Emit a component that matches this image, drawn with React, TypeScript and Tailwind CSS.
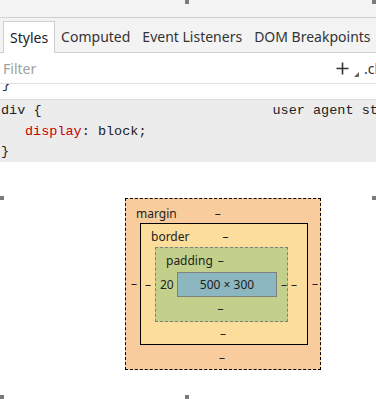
import React from 'react';

const ui = { fontFamily: '"Segoe UI", "Noto Sans", "Open Sans", sans-serif' };
const mono = { fontFamily: 'Consolas, "Liberation Mono", "DejaVu Sans Mono", monospace' };

function Handle({ className }: { className: string }) {
  return <div className={`absolute w-[4px] h-[4px] bg-[#7a7a7a] ${className}`} />;
}

const tabs = ['Styles', 'Computed', 'Event Listeners', 'DOM Breakpoints'];

export default function App() {
  return (
    <div className="relative w-[376px] h-[399px] overflow-hidden bg-white text-[#222]" style={ui}>
      <div className="h-[18px] bg-[#f3f3f3] border-b border-[#d0d0d0]" />

      <div className="h-[35px] bg-[#f3f3f3] border-b border-[#cfcfcf] flex items-end pl-[3px] whitespace-nowrap">
        {tabs.map((t, i) => (
          <div
            key={t}
            className={`h-[32px] flex items-center text-[14px] leading-none px-[6px] -mb-px ${
              i === 0 ? 'bg-white border border-b-0 border-[#cfcfcf] text-[#222]' : 'text-[#333]'
            }`}
          >
            {t}
          </div>
        ))}
      </div>

      <div className="h-[31px] flex items-center border-b border-[#e0e0e0] whitespace-nowrap overflow-hidden">
        <span className="ml-[3px] w-[333px] shrink-0 text-[14px] text-[#a0a0a0]">Filter</span>
        <svg width="13" height="13" viewBox="0 0 13 13" className="shrink-0">
          <path d="M6.5 0.5 V12.5 M0.5 6.5 H12.5" stroke="#333" strokeWidth="1.6" />
        </svg>
        <svg width="5" height="5" viewBox="0 0 5 5" className="shrink-0 ml-[5px] mt-[13px]">
          <path d="M5 0 L5 5 L0 5 Z" fill="#666" />
        </svg>
        <span className="shrink-0 ml-[5px] text-[14px] text-[#333]">.cls</span>
      </div>

      <div className="h-[15px] overflow-hidden relative" style={mono}>
        <div className="absolute left-[2px] -top-[9px] text-[13.5px]">{'}'}</div>
      </div>

      <div className="bg-[#ececec] border-t border-[#dedede] h-[63px] pt-[1px] text-[13.5px] leading-[20.5px] whitespace-nowrap overflow-hidden" style={mono}>
        <div className="flex">
          <span className="pl-[1px]">div {'{'}</span>
          <span className="ml-[231px] text-[#222]">user agent st</span>
        </div>
        <div className="pl-[25px]">
          <span className="text-[#c80000]">display</span>: block;
        </div>
        <div className="pl-[1px]">{'}'}</div>
      </div>

      <div className="pt-[36px] pl-[125px] text-[12px] leading-none text-[#222]">
        <div className="w-[196px] h-[172px] bg-[#f9cc9d] border border-dashed border-black flex flex-col px-[14px] pt-[8px] pb-[5px]">
          <div className="flex items-center h-[16px]">
            <span className="ml-[-4px]">margin</span>
            <span className="ml-[38px]">–</span>
          </div>
          <div className="flex items-center mt-[2px]">
            <span className="w-0 -ml-[9px] mr-[9px]">–</span>
            <div className="w-[168px] h-[122px] bg-[#fddd9b] border border-black flex flex-col px-[14px] pt-[6px]">
              <div className="flex items-center h-[14px]">
                <span className="ml-[-4px]">border</span>
                <span className="ml-[33px]">–</span>
              </div>
              <div className="flex items-center mt-[3px]">
                <span className="w-0 -ml-[10px] mr-[10px]">–</span>
                <div className="w-[137px] h-[75px] bg-[#c3d08b] border border-dashed border-[#808080] flex flex-col pt-[6px]">
                  <div className="flex items-center h-[14px]">
                    <span className="ml-[10px]">padding</span>
                    <span className="ml-[5px]">–</span>
                  </div>
                  <div className="flex items-center mt-[4px]">
                    <span className="ml-[4px] w-[17px]">20</span>
                    <div className="w-[100px] h-[25px] bg-[#8cb6c0] border border-[#808080] flex items-center justify-center">
                      500 × 300
                    </div>
                    <span className="ml-[4px]">–</span>
                  </div>
                  <div className="flex justify-center mt-[6px] pr-[2px]">–</div>
                </div>
                <span className="ml-[3px]">–</span>
              </div>
              <div className="flex justify-center mt-[6px] pr-[2px]">–</div>
            </div>
            <span className="ml-[4px]">–</span>
          </div>
          <div className="flex justify-center mt-[7px] pr-[2px]">–</div>
        </div>
      </div>

      <Handle className="top-0 left-[185px]" />
      <Handle className="top-0 right-0" />
      <Handle className="top-[196px] left-0" />
      <Handle className="top-[196px] right-0" />
      <Handle className="bottom-0 left-0" />
      <Handle className="bottom-0 left-[185px]" />
    </div>
  );
}
